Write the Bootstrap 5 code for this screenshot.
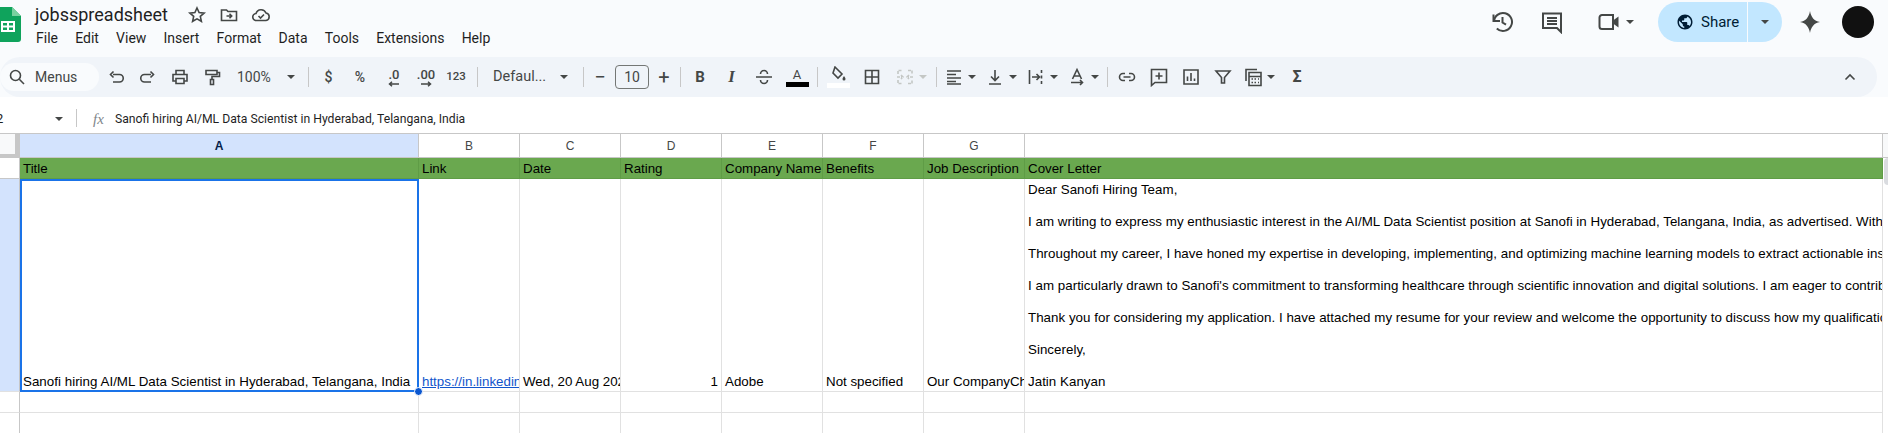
<!DOCTYPE html>
<html lang="en">
<head>
    <meta charset="UTF-8">
    <title>jobsspreadsheet</title>
    <link rel="stylesheet" href="https://cdn.jsdelivr.net/npm/bootstrap@5.3.0/dist/css/bootstrap.min.css">
    <style>
        html, body { width: 1888px; height: 433px; overflow: hidden; }
        body { background: #f9fbfd; color: #444746; font-family: Roboto, "Liberation Sans", sans-serif; }
        svg.ic { width: 20px; height: 20px; fill: none; stroke: #444746; stroke-width: 1.6; flex: none; }
        svg.ic-lg { width: 24px; height: 24px; stroke-width: 2; }

        .top-bar { height: 57px; }
        .logo-box { width: 35px; height: 57px; padding-top: 7px; }
        .doc-name { font-size: 18px; line-height: 20px; color: #1f1f1f; width: 152px; margin-top: 5px; }
        .doc-icons svg { margin-right: 12px; }
        .menu-row { font-size: 14px; line-height: 20px; color: #1f1f1f; margin-top: 3px; margin-left: 1px; }
        .menu-row span { margin-right: 17.2px; }
        .top-right { height: 44px; padding-right: 14px; }
        .hist-icon { margin-right: 26px; }
        .comment-icon { margin-right: 33px; }
        .video-icon { margin-right: 5px; }
        .video-car { margin-right: 24px; }
        .share-pill { width: 124px; height: 40px; border-radius: 20px; background: #c2e7ff; color: #001d35; font-size: 15px; }
        .share-main { width: 90px; padding-left: 18px; gap: 7px; border-right: 1px solid #f9fbfd; height: 40px; }
        .share-car { margin-left: 13px; border-top-color: #001d35; }
        .gem { width: 32px; margin-left: 12px; }
        .avatar { width: 32px; height: 32px; border-radius: 50%; background: #111; margin-left: 16px; }

        .tool-bar { height: 40px; width: 1877px; background: #f0f4f9; border-radius: 20px; font-size: 14px; }
        .search-pill { width: 99px; height: 28px; border-radius: 14px; background: #f9fbfd; font-size: 14px; padding-left: 7px; gap: 8px; flex: none; margin-right: 1px; }
        .tb { height: 28px; flex: none; display: flex; align-items: center; justify-content: center; color: #444746; }
        .tb-dd { justify-content: flex-start; padding-left: 3px; gap: 4px; }
        .tb-merge { padding-left: 5px; }
        .tb-end { margin-right: 11px; }
        .w24 { width: 24px; } .w28 { width: 28px; } .w30 { width: 30px; } .w31 { width: 31px; }
        .w32 { width: 32px; } .w34 { width: 34px; } .w36 { width: 36px; }
        .w40 { width: 40px; } .w41 { width: 41px; } .w42 { width: 42px; }
        .tsep { width: 1px; height: 20px; background: #c7c7c7; flex: none; }
        .m2 { margin: 0 3px 0 2px; } .m4 { margin: 0 4px; } .m5 { margin: 0 4px 0 5px; } .m1 { margin: 0 3px 0 1px; }
        .car { width: 0; height: 0; border-left: 4px solid transparent; border-right: 4px solid transparent; border-top: 4px solid #444746; flex: none; }
        .car-off { border-top-color: #c4c7c5; }
        .zoom-cell { width: 76px; padding-left: 9px; padding-right: 9px; justify-content: space-between; font-size: 14px; }
        .font-cell { width: 97px; padding-left: 11px; padding-right: 11px; justify-content: space-between; font-size: 14.5px; }
        .size-box { width: 34px; height: 24px; margin-left: 3px; border: 1px solid #747775; border-radius: 4px; font-size: 14px; flex: none; }
        .num-fmt { font-size: 12px; font-weight: 500; }
        .num-big { font-size: 14px; }
        .num-123 { font-size: 11.5px; }
        .bold-b { font-weight: 700; font-size: 15px; }
        .ital-i { font-family: "Liberation Serif", serif; font-style: italic; font-weight: 700; font-size: 17px; }
        .txt-col { flex-direction: column; font-size: 13px; line-height: 13px; }
        .col-bar { width: 23px; height: 5px; background: #000; margin-top: 1px; }
        .fill-bar { width: 23px; height: 5px; background: #fff; margin-top: 1px; }
        .merge-ic { stroke: #c4c7c5 !important; }

        .formula-bar { height: 36px; padding-top: 12px; background: #fff; font-size: 12.2px; line-height: 20px; color: #1f1f1f; }
        .name-box { width: 80px; height: 20px; padding-right: 13px; margin-left: -4px; font-size: 13px; }
        .fsep { width: 1px; height: 18px; background: #c7c7c7; }
        .fx { font-family: "Liberation Serif", serif; font-style: italic; font-size: 15px; color: #80868b; width: 38px; padding-left: 16px; }

        .grid-wrap { background: #fff; height: 300px; }
        .scroll-gutter { width: 5px; flex: none; }
        .gutter-head { height: 25px; background: #f8f9fa; border-top: 1px solid #c7c7c7; border-bottom: 1px solid #c7c7c7; }
        .gutter-thumb { height: 27px; margin-left: 1px; background: #dadce0; border-radius: 4px 0 0 4px; }

        table.sheet { table-layout: fixed; width: 1883px; flex: none; align-self: flex-start; border-collapse: separate; border-spacing: 0; background: #fff; font-family: "Liberation Sans", Arial, sans-serif; font-size: 13.33px; color: #000; }
        table.sheet td { padding: 0 3px; border: 0; border-right: 1px solid #e1e1e1; border-bottom: 1px solid #e1e1e1; box-shadow: none; overflow: hidden; white-space: nowrap; vertical-align: bottom; line-height: 16px; background: #fff; color: #000; }
        table.sheet tr.col-row td { height: 25px; border-top: 1px solid #c7c7c7; border-right-color: #c7c7c7; border-bottom: 1px solid #c7c7c7; color: #444746; font-size: 12px; text-align: center; vertical-align: middle; }
        table.sheet tr.col-row td.corner { background: #f8f9fa; border-right: 5px solid #c7c7c7; border-bottom: 4px solid #c7c7c7; }
        table.sheet tr.col-row td.col-on { background: #d3e3fd; color: #041e49; font-weight: 700; }
        table.sheet tr.head-row td { height: 21px; padding-top: 1px; background: #6aa84f; border-right-color: #5f9c46; border-bottom-color: #5f9c46; vertical-align: middle; }
        table.sheet tr.head-row td.rh { background: #fff; border-right-color: #c7c7c7; border-bottom-color: #c7c7c7; }
        table.sheet tr.data-row td { height: 213px; padding-bottom: 1px; }
        table.sheet tr.blank-row td { height: 21px; }
        table.sheet td.rh { border-right: 1px solid #c7c7c7; }
        table.sheet td.rh-on { background: #d3e3fd; }
        table.sheet td.sel { position: relative; overflow: visible; letter-spacing: .03px; box-shadow: inset 2px 2px 0 #1a73e8, inset -1px -1px 0 #1a73e8; border-right-color: #1a73e8; border-bottom-color: #1a73e8; }
        table.sheet td.num { text-align: right; }
        table.sheet td.letter { white-space: pre; letter-spacing: .03px; }
        .handle { position: absolute; right: -5px; bottom: -5px; width: 9px; height: 9px; border-radius: 50%; background: #0b57d0; border: 1px solid #fff; }
        .sheet-link { color: #1155cc; text-decoration: underline; }
    </style>
</head>
<body>

    <!-- Title + menus -->
    <div class="top-bar d-flex">
        <div class="logo-box">
            <svg width="21" height="35" viewBox="6 0 21 35">
                <path d="M0 3a3 3 0 0 1 3-3h15l9 9v23a3 3 0 0 1-3 3H3a3 3 0 0 1-3-3z" fill="#0fa35c"/>
                <path d="M18 0l9 9h-9z" fill="#79d19f"/>
                <path d="M7 14h14v11H7z" fill="#fff"/>
                <path d="M9 16h4v2.5H9zM15 16h4v2.5h-4zM9 20.5h4V23H9zM15 20.5h4V23h-4z" fill="#0fa35c"/>
            </svg>
        </div>
        <div>
            <div class="d-flex align-items-center">
                <div class="doc-name">jobsspreadsheet</div>
                <div class="doc-icons d-flex mt-1">
                    <svg class="ic" viewBox="0 0 20 20"><path d="M10 3l2.100 4.600 5 .5-3.800 3.300 1.100 4.900L10 13.800l-4.400 2.500 1.100-4.900-3.800-3.300 5-.5z"/></svg>
                    <svg class="ic" viewBox="0 0 20 20"><path d="M2.500 5h5L9 6.500h8.500v9h-15z"/><path d="M7.500 11h5M10.500 8.800l2.200 2.200-2.200 2.200"/></svg>
                    <svg class="ic" viewBox="0 0 20 20"><path d="M5.500 15.500a3.500 3.500 0 0 1-.5-7 5.300 5.300 0 0 1 10-.5 3.800 3.800 0 0 1 0 7.500z"/><path d="M7.500 11l2 2L13 9.500"/></svg>
                </div>
            </div>
            <div class="menu-row d-flex">
                <span>File</span><span>Edit</span><span>View</span><span>Insert</span><span>Format</span><span>Data</span><span>Tools</span><span>Extensions</span><span>Help</span>
            </div>
        </div>
        <div class="top-right ms-auto d-flex align-items-center align-self-start">
            <svg class="ic ic-lg hist-icon" viewBox="0 0 24 24"><path d="M4 12a9 9 0 1 1 2.800 6.500"/><path d="M3.500 4.500V11H10"/><path d="M12.500 7v5.500l3.500 2.200"/></svg>
            <svg class="ic ic-lg comment-icon" viewBox="0 0 24 24"><path d="M3 3.500h18V22l-4-4H3z"/><path d="M7 8h10M7 11h10M7 14h10"/></svg>
            <svg class="ic ic-lg video-icon" viewBox="0 0 24 24"><path d="M5 5h11v14H5a2.500 2.500 0 0 1-2.500-2.500v-9A2.500 2.500 0 0 1 5 5z"/><path d="M16 10.500l5.500-4v11l-5.500-4z" fill="#444746" stroke="none"/></svg>
            <span class="car video-car"></span>
            <div class="share-pill d-flex align-items-center">
                <div class="share-main d-flex align-items-center">
                    <svg width="18" height="18" viewBox="0 0 24 24"><path fill="#001d35" d="M12 2C6.480 2 2 6.480 2 12s4.480 10 10 10 10-4.480 10-10S17.520 2 12 2zm-1 17.930c-3.950-.49-7-3.850-7-7.930 0-.62.080-1.210.210-1.790L9 15v1c0 1.100.9 2 2 2v1.930zm6.900-2.540c-.26-.81-1-1.390-1.900-1.390h-1v-3c0-.55-.45-1-1-1H8v-2h2c.55 0 1-.45 1-1V7h2c1.100 0 2-.9 2-2v-.41c2.930 1.190 5 4.060 5 7.410 0 2.080-.8 3.970-2.100 5.390z"/></svg>
                    <span>Share</span>
                </div>
                <span class="car share-car"></span>
            </div>
            <div class="gem d-flex justify-content-center">
                <svg width="22" height="22" viewBox="0 0 22 22"><path d="M11 0c1 6 4 10 10 11-6 1-9 5-10 11-1-6-4-10-10-11 6-1 9-5 10-11z" fill="#444746"/></svg>
            </div>
            <div class="avatar"></div>
        </div>
    </div>

    <!-- Toolbar -->
    <div class="tool-bar d-flex align-items-center">
        <div class="search-pill d-flex align-items-center">
            <svg class="ic" viewBox="0 0 20 20"><circle cx="8.500" cy="8.500" r="5"/><path d="M12.300 12.300L17 17"/></svg>
            <span>Menus</span>
        </div>
        <div class="tb w32"><svg class="ic" viewBox="0 0 20 20"><path d="M7 7.500h6.500a3.500 3.500 0 0 1 0 7.500H7"/><path d="M7.500 4.500l-3 3 3 3"/></svg></div>
        <div class="tb w32"><svg class="ic" viewBox="0 0 20 20"><path d="M13 7.500H6.500a3.500 3.500 0 0 0 0 7.500H13"/><path d="M12.500 4.500l3 3-3 3"/></svg></div>
        <div class="tb w32"><svg class="ic" viewBox="0 0 20 20"><path d="M6 7V3.500h8V7M6 14H3V7.500h14V14h-3"/><path d="M6 11.500h8v5H6z"/></svg></div>
        <div class="tb w32"><svg class="ic" viewBox="0 0 20 20"><path d="M4 3.500h11v4H4zM15 5.500h2.500v4H10v3"/><path d="M8.500 12.500h3v5h-3z"/></svg></div>
        <div class="tb zoom-cell"><span>100%</span><span class="car"></span></div>
        <div class="tsep m4"></div>
        <div class="tb w31 num-fmt num-big">$</div>
        <div class="tb w32 num-fmt num-big">%</div>
        <div class="tb w36 num-fmt txt-col"><span>.0</span><svg width="14" height="6" viewBox="0 0 14 6"><path d="M12 3H3M5 .8L2.500 3 5 5.200" fill="none" stroke="#444746" stroke-width="1.500"/></svg></div>
        <div class="tb w28 num-fmt txt-col"><span>.00</span><svg width="14" height="6" viewBox="0 0 14 6"><path d="M2 3h9M9 .8L11.500 3 9 5.200" fill="none" stroke="#444746" stroke-width="1.500"/></svg></div>
        <div class="tb w32 num-fmt num-123">123</div>
        <div class="tsep m5"></div>
        <div class="tb font-cell"><span>Defaul...</span><span class="car"></span></div>
        <div class="tsep m4"></div>
        <div class="tb w24 fs-5">&minus;</div>
        <div class="size-box d-flex align-items-center justify-content-center">10</div>
        <div class="tb w30 fs-5">+</div>
        <div class="tsep m1"></div>
        <div class="tb w32 bold-b">B</div>
        <div class="tb w31 ital-i">I</div>
        <div class="tb w34"><svg class="ic" viewBox="0 0 20 20"><path d="M2 10h16M6.500 7a3.500 3.500 0 0 1 7 0M13.500 13a3.500 3.500 0 0 1-7 0"/></svg></div>
        <div class="tb w32 txt-col"><span>A</span><span class="col-bar"></span></div>
        <div class="tsep m4"></div>
        <div class="tb w32 txt-col"><svg width="16" height="16" viewBox="0 0 16 16"><path d="M5 1l7 7-4 4-5-5z" fill="none" stroke="#444746" stroke-width="1.600"/><path d="M14 10c1 1.500 1.500 2.300 1.500 3a1.500 1.500 0 0 1-3 0c0-.7.5-1.500 1.500-3z" fill="#444746"/></svg><span class="fill-bar"></span></div>
        <div class="tb w36"><svg class="ic" viewBox="0 0 20 20"><path d="M3.500 3.500h13v13h-13zM10 3.500v13M3.500 10h13"/></svg></div>
        <div class="tb w42 tb-dd tb-merge"><svg class="ic merge-ic" viewBox="0 0 20 20"><path d="M3 7V3.500h4M13 3.500h4V7M3 13v3.500h4M13 16.500h4V13M2 10h5M6 8l2 2-2 2M18 10h-5M14 8l-2 2 2 2" stroke-dasharray="3 1"/></svg><span class="car car-off"></span></div>
        <div class="tsep m4"></div>
        <div class="tb w41 tb-dd"><svg class="ic" viewBox="0 0 20 20"><path d="M3 4h14M3 7.500h9M3 11h14M3 14.500h9M3 17h14" stroke-width="1.400"/></svg><span class="car"></span></div>
        <div class="tb w41 tb-dd"><svg class="ic" viewBox="0 0 20 20"><path d="M10 3v10M6 9.500l4 4 4-4M4 17h12"/></svg><span class="car"></span></div>
        <div class="tb w41 tb-dd"><svg class="ic" viewBox="0 0 20 20"><path d="M3.500 3v14M6 10h7M10.500 7l3 3-3 3M15.500 3v3M15.500 8.500v3M15.500 14v3"/></svg><span class="car"></span></div>
        <div class="tb w41 tb-dd"><svg class="ic" viewBox="0 0 20 20"><path d="M5.500 12L10 2.500 14.500 12M7 9h6M4 15.500h11M13 13l2.500 2.500L13 18"/></svg><span class="car"></span></div>
        <div class="tsep m2"></div>
        <div class="tb w32"><svg class="ic" viewBox="0 0 20 20"><path d="M8 6.500H6a3.500 3.500 0 0 0 0 7h2M12 6.500h2a3.500 3.500 0 0 1 0 7h-2M6.500 10h7"/></svg></div>
        <div class="tb w32"><svg class="ic" viewBox="0 0 20 20"><path d="M2.500 2.500h15v13H6l-3.500 3zM10 5.500v7M6.500 9h7"/></svg></div>
        <div class="tb w31"><svg class="ic" viewBox="0 0 20 20"><path d="M3 3h14v14H3zM6.500 14V9.500M10 14V6M13.500 14v-2.500"/></svg></div>
        <div class="tb w34"><svg class="ic" viewBox="0 0 20 20"><path d="M3 4h14l-5.500 6.500V16h-3v-5.500z"/></svg></div>
        <div class="tb w40 tb-dd"><svg class="ic" viewBox="0 0 20 20"><path d="M3 14V2.500h11M6 5.500h12v13H6zM6 9.500h12"/><path d="M8.500 12H10M11.500 12H13M15 12h1M8.500 15.500H10M11.500 15.500H13M15 15.500h1"/></svg><span class="car"></span></div>
        <div class="tb w34 fs-6 fw-bold">&Sigma;</div>
        <div class="tb w32 ms-auto tb-end"><svg width="12" height="8" viewBox="0 0 12 8"><path d="M1.500 6.500L6 2l4.500 4.500" fill="none" stroke="#444746" stroke-width="1.600"/></svg></div>
    </div>

    <!-- Formula bar -->
    <div class="formula-bar d-flex align-items-start">
        <div class="name-box d-flex align-items-center justify-content-between"><span>2</span><span class="car"></span></div>
        <div class="fsep"></div>
        <div class="fx">fx</div>
        <div>Sanofi hiring AI/ML Data Scientist in Hyderabad, Telangana, India</div>
    </div>

    <!-- Grid -->
    <div class="grid-wrap d-flex">
        <table class="table mb-0 sheet">
            <colgroup>
                <col style="width:20px"><col style="width:399px"><col style="width:101px"><col style="width:101px"><col style="width:101px"><col style="width:101px"><col style="width:101px"><col style="width:101px"><col>
            </colgroup>
            <tbody>
                <tr class="col-row">
                    <td class="corner"></td><td class="col-on">A</td><td>B</td><td>C</td><td>D</td><td>E</td><td>F</td><td>G</td><td></td>
                </tr>
                <tr class="head-row">
                    <td class="rh"></td><td>Title</td><td>Link</td><td>Date</td><td>Rating</td><td>Company Name</td><td>Benefits</td><td>Job Description</td><td>Cover Letter</td>
                </tr>
                <tr class="data-row">
                    <td class="rh rh-on"></td>
                    <td class="sel">Sanofi hiring AI/ML Data Scientist in Hyderabad, Telangana, India<span class="handle"></span></td>
                    <td><span class="sheet-link">https://in.linkedin.com/jobs/view/sanofi</span></td>
                    <td>Wed, 20 Aug 2025</td>
                    <td class="num">1</td>
                    <td>Adobe</td>
                    <td>Not specified</td>
                    <td>Our CompanyChallenges</td>
                    <td class="letter">Dear Sanofi Hiring Team,

I am writing to express my enthusiastic interest in the AI/ML Data Scientist position at Sanofi in Hyderabad, Telangana, India, as advertised. With a strong background in data science and machine learning, I am confident in my ability.

Throughout my career, I have honed my expertise in developing, implementing, and optimizing machine learning models to extract actionable insights from complex data sets and more.

I am particularly drawn to Sanofi's commitment to transforming healthcare through scientific innovation and digital solutions. I am eager to contribute my skills to your team and mission.

Thank you for considering my application. I have attached my resume for your review and welcome the opportunity to discuss how my qualifications align with your needs.

Sincerely,

Jatin Kanyan</td>
                </tr>
                <tr class="blank-row">
                    <td class="rh"></td><td></td><td></td><td></td><td></td><td></td><td></td><td></td><td></td>
                </tr>
                <tr class="blank-row">
                    <td class="rh"></td><td></td><td></td><td></td><td></td><td></td><td></td><td></td><td></td>
                </tr>
            </tbody>
        </table>
        <div class="scroll-gutter">
            <div class="gutter-head"></div>
            <div class="gutter-thumb"></div>
        </div>
    </div>

    <script src="https://cdn.jsdelivr.net/npm/bootstrap@5.3.0/dist/js/bootstrap.bundle.min.js"></script>
</body>
</html>
